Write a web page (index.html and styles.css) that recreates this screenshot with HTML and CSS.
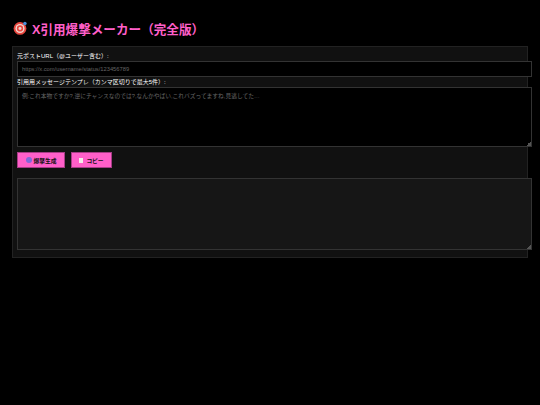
FILE: index.html
```html
<!DOCTYPE html>
<html lang="ja">
<head>
  <meta charset="UTF-8">
  <meta name="viewport" content="width=device-width, initial-scale=1.0">
  <title>X引用爆撃メーカー（完全版）</title>
  <link rel="stylesheet" href="styles.css">
</head>
<body>
  <h1 class="title">
    <svg class="target-icon" viewBox="0 0 16 16" aria-hidden="true">
      <circle cx="8" cy="8.5" r="7.3" fill="#e8473f"/>
      <circle cx="8" cy="8.5" r="5.2" fill="#f0d8d0"/>
      <circle cx="8" cy="8.5" r="3.6" fill="#e8473f"/>
      <circle cx="8" cy="8.5" r="1.7" fill="#f0d8d0"/>
      <circle cx="13.6" cy="2.8" r="2" fill="#4a90d9"/>
    </svg>
    <span>X引用爆撃メーカー（完全版）</span>
  </h1>

  <div class="panel">
    <label for="post-url">元ポストURL（@ユーザー含む）:</label>
    <input type="text" id="post-url" placeholder="https://x.com/username/status/123456789">

    <label for="template">引用用メッセージテンプレ（カンマ区切りで最大5件）:</label>
    <textarea id="template" class="template-box" placeholder="例:これ本物ですか?,逆にチャンスなのでは?,なんかやばい,これバズってますね,見逃してた…"></textarea>

    <div class="actions">
      <button class="generate"><span class="dot"></span>爆撃生成</button>
      <button class="copy"><span class="clip"></span>コピー</button>
    </div>

    <textarea id="output" class="output-box"></textarea>
  </div>
</body>
</html>
```

FILE: styles.css
```css
body {
  font-family: "Liberation Sans", "Noto Sans CJK JP", sans-serif;
  margin: 0;
  padding: 12px;
  background-color: #000;
  color: #fff;
}
.title {
  display: flex;
  align-items: center;
  gap: 5px;
  height: 18px;
  margin: 7px 0 9px 1px;
  font-size: 12.6px;
  font-weight: bold;
  color: #ff5fc9;
}
.target-icon {
  width: 14px;
  height: 14px;
}
.panel {
  width: 506px;
  padding: 4px;
  background-color: #111;
  border: 1px solid #222;
}
label {
  display: block;
  height: 10px;
  font-size: 6px;
  line-height: 10px;
}
input,
textarea {
  display: block;
  width: 505px;
  padding: 3px 4px;
  box-sizing: content-box;
  margin: 0;
  background-color: #000;
  border: 1px solid #333;
  color: #fff;
  font-family: inherit;
  font-size: 5.75px;
}
input {
  height: 8px;
}
input::placeholder,
textarea::placeholder {
  color: #666;
  opacity: 1;
}
textarea::-webkit-resizer {
  background: linear-gradient(135deg, transparent 50%, #555 50%) no-repeat right bottom / 5px 5px;
}
.template-box {
  height: 52px;
}
.actions {
  display: flex;
  gap: 6px;
  margin-top: 5px;
}
button {
  display: flex;
  align-items: center;
  justify-content: center;
  gap: 2px;
  height: 16px;
  padding: 0;
  background-color: #ff5fc9;
  border: 1px solid #a63c86;
  color: #111;
  font-family: inherit;
  font-size: 5.75px;
  font-weight: bold;
}
.generate {
  width: 48px;
}
.copy {
  width: 41px;
}
.dot {
  width: 6px;
  height: 6px;
  border-radius: 50%;
  background-color: #7f6ad8;
}
.clip {
  width: 4px;
  height: 5px;
  margin-right: 1px;
  background-color: #f5ecec;
}
.output-box {
  height: 64px;
  margin-top: 10px;
  margin-bottom: 3px;
  background-color: #161616;
}
```
